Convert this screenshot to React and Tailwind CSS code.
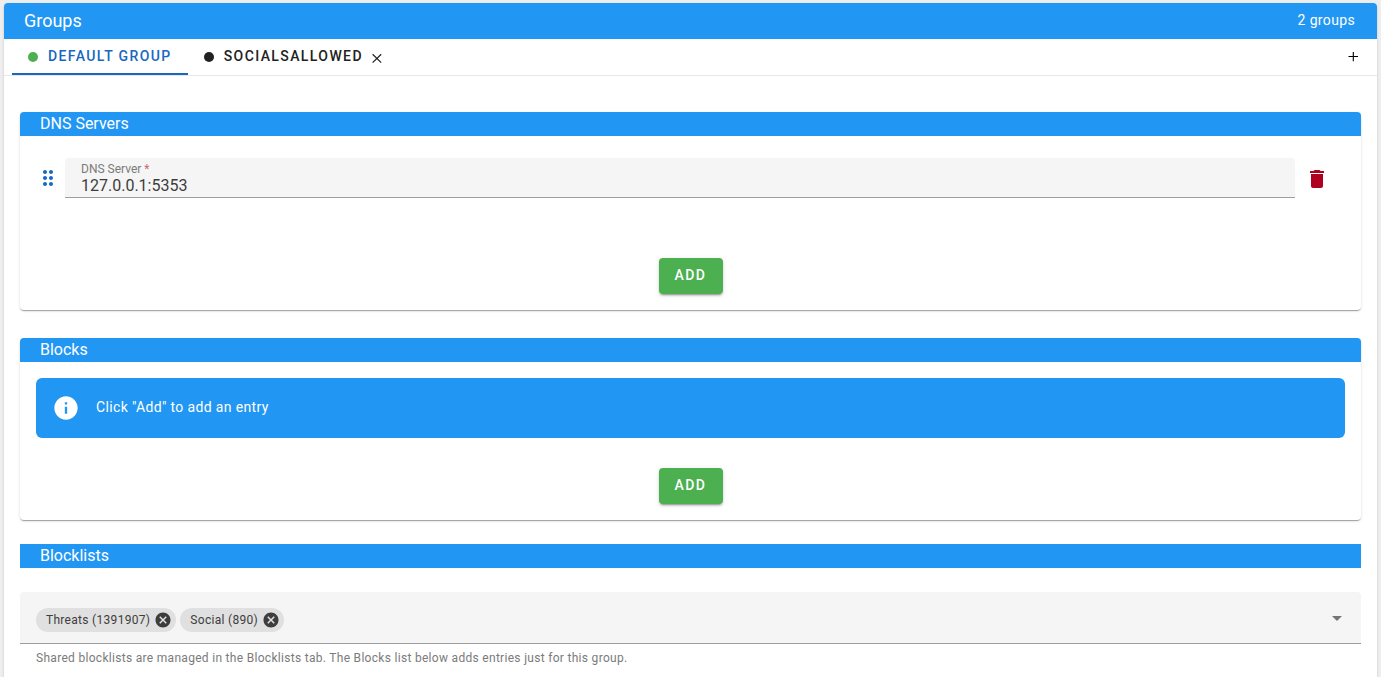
import { useState } from "react"
import { MdArrowDropDown, MdCancel, MdDelete, MdDragIndicator, MdInfo } from "react-icons/md"

const groups = [
  { id: "default", name: "Default Group", dot: "bg-[#4caf50]", removable: false },
  { id: "socials", name: "SocialsAllowed", dot: "bg-[#212121]", removable: true },
]

const blocklists = [
  { id: "threats", name: "Threats", count: 1391907 },
  { id: "social", name: "Social", count: 890 },
]

function PlusIcon() {
  return (
    <svg viewBox="0 0 16 16" className="h-4 w-4" fill="none" stroke="currentColor" strokeWidth="1.1">
      <path d="M3.5 7.5h9.5M8.3 3v9.2" />
    </svg>
  )
}

function CloseIcon() {
  return (
    <svg viewBox="0 0 16 16" className="h-4 w-4" fill="none" stroke="currentColor" strokeWidth="1.2">
      <path d="M3.6 4.2l8.6 8.4M12.2 4.2l-8.6 8.4" />
    </svg>
  )
}

function AddButton({ onClick }) {
  return (
    <button
      type="button"
      onClick={onClick}
      className="h-9 min-w-16 px-4 pb-0.5 rounded bg-[#4caf50] text-white text-sm font-medium uppercase tracking-widest shadow-[0_3px_1px_-2px_rgba(0,0,0,0.2),0_2px_2px_0_rgba(0,0,0,0.14),0_1px_5px_0_rgba(0,0,0,0.12)]"
    >
      Add
    </button>
  )
}

function SectionCard({ title, children }) {
  return (
    <section className="rounded bg-white shadow-[0_2px_1px_-1px_rgba(0,0,0,0.2),0_1px_1px_0_rgba(0,0,0,0.14),0_1px_3px_0_rgba(0,0,0,0.12)]">
      <h2 className="rounded-t bg-[#2196f3] px-5 text-base leading-6 text-white">{title}</h2>
      {children}
    </section>
  )
}

function GroupTabs({ active, onSelect }) {
  return (
    <div className="flex justify-between border-b border-[#e8e8e8] px-2">
      <div className="flex">
        {groups.map((group) => (
          <div
            key={group.id}
            className={`flex h-9 items-center gap-1.5 border-b-2 px-4 ${
              active === group.id ? "border-[#1867c0] text-[#1867c0]" : "border-transparent text-[#212121]"
            }`}
          >
            <button
              type="button"
              onClick={() => onSelect(group.id)}
              className="flex items-center gap-2.5 text-sm font-medium uppercase tracking-widest"
            >
              <span className={`mt-0.5 h-2.5 w-2.5 rounded-full ${group.dot}`} />
              {group.name}
            </button>
            {group.removable && (
              <button type="button" aria-label={`Remove ${group.name}`} className="mt-1">
                <CloseIcon />
              </button>
            )}
          </div>
        ))}
      </div>
      <button type="button" aria-label="Add group" className="px-2 text-black">
        <PlusIcon />
      </button>
    </div>
  )
}

export default function App() {
  const [active, setActive] = useState("default")
  const [servers, setServers] = useState(["127.0.0.1:5353"])
  const [selected, setSelected] = useState(["threats", "social"])

  const updateServer = (index, value) => {
    setServers((prev) => prev.map((server, i) => (i === index ? value : server)))
  }

  const removeServer = (index) => {
    setServers((prev) => prev.filter((_, i) => i !== index))
  }

  const addBlocklist = (e) => {
    if (e.target.value) {
      setSelected((prev) => [...prev, e.target.value])
    }
  }

  return (
    <div className="flex min-h-screen flex-col bg-[#eeeeee] px-1 pt-[3px] font-[Roboto,sans-serif]">
      <main className="flex-1 rounded-t bg-white shadow-[0_2px_1px_-1px_rgba(0,0,0,0.2),0_1px_1px_0_rgba(0,0,0,0.14),0_1px_3px_0_rgba(0,0,0,0.12)]">
        <header className="flex h-9 items-center justify-between rounded-t bg-[#2196f3] pr-[22px] pl-5 text-white">
          <h1 className="text-lg">Groups</h1>
          <span className="pb-0.5 text-sm tracking-wide">2 groups</span>
        </header>

        <GroupTabs active={active} onSelect={setActive} />

        <div className="px-4 pt-9">
          <SectionCard title="DNS Servers">
            <div className="px-4 pt-[22px] pb-[60px]">
              {servers.map((server, index) => (
                <div key={index} className="flex items-center">
                  <MdDragIndicator className="h-6 w-6 text-[#1867c0]" />
                  <div className="ml-[5px] flex h-10 flex-1 flex-col rounded-t border-b border-[#9e9e9e] bg-[#f5f5f5] px-4 pt-[3px]">
                    <label htmlFor={`server-${index}`} className="text-xs leading-4 text-[#7b7b7b]">
                      DNS Server <span className="text-[#cf6679]">*</span>
                    </label>
                    <input
                      id={`server-${index}`}
                      type="text"
                      required
                      value={server}
                      onChange={(e) => updateServer(index, e.target.value)}
                      className="h-4 text-base leading-4 text-[#3d3d3d] outline-none"
                    />
                  </div>
                  <button
                    type="button"
                    aria-label="Delete DNS server"
                    onClick={() => removeServer(index)}
                    className="ml-2 mr-[14px] px-0.5 pt-0.5 text-[#b00020]"
                  >
                    <MdDelete className="h-6 w-6" />
                  </button>
                </div>
              ))}
            </div>
            <div className="flex justify-center pb-4">
              <AddButton onClick={() => setServers((prev) => [...prev, ""])} />
            </div>
          </SectionCard>

          <div className="mt-7">
            <SectionCard title="Blocks">
              <div className="px-4 pt-4 pb-[30px]">
                <div className="flex h-[60px] items-center gap-4 rounded-md bg-[#2196f3] px-4 text-white">
                  <MdInfo className="h-7 w-7" />
                  <p className="pb-0.5 text-sm tracking-wide">Click "Add" to add an entry</p>
                </div>
              </div>
              <div className="flex justify-center pb-4">
                <AddButton />
              </div>
            </SectionCard>
          </div>

          <section className="mt-6">
            <h2 id="blocklists-title" className="bg-[#2196f3] px-5 text-base leading-6 text-white">
              Blocklists
            </h2>
            <div className="mt-6 flex h-[52px] items-center gap-1 rounded-t border-b border-[#9e9e9e] bg-[#f5f5f5] px-4 pt-1">
              {blocklists
                .filter((list) => selected.includes(list.id))
                .map((list) => (
                  <span
                    key={list.id}
                    className="flex h-6 items-center gap-1 rounded-full bg-[#e0e0e0] pr-1 pl-2.5 text-xs tracking-wide text-[#3d3d3d]"
                  >
                    {list.name} ({list.count})
                    <button
                      type="button"
                      aria-label={`Remove ${list.name}`}
                      onClick={() => setSelected((prev) => prev.filter((id) => id !== list.id))}
                    >
                      <MdCancel className="h-[18px] w-[18px]" />
                    </button>
                  </span>
                ))}
              <select
                aria-labelledby="blocklists-title"
                value=""
                onChange={addBlocklist}
                className="-mr-7 h-8 flex-1 appearance-none bg-transparent outline-none"
              >
                <option value=""></option>
                {blocklists
                  .filter((list) => !selected.includes(list.id))
                  .map((list) => (
                    <option key={list.id} value={list.id}>
                      {list.name}
                    </option>
                  ))}
              </select>
              <MdArrowDropDown className="pointer-events-none -mr-1 mb-1 h-6 w-6 text-[#757575]" />
            </div>
            <p className="px-4 pt-1.5 text-xs tracking-wide text-[#7b7b7b]">
              Shared blocklists are managed in the Blocklists tab. The Blocks list below adds entries just for this
              group.
            </p>
          </section>
        </div>
      </main>
    </div>
  )
}
